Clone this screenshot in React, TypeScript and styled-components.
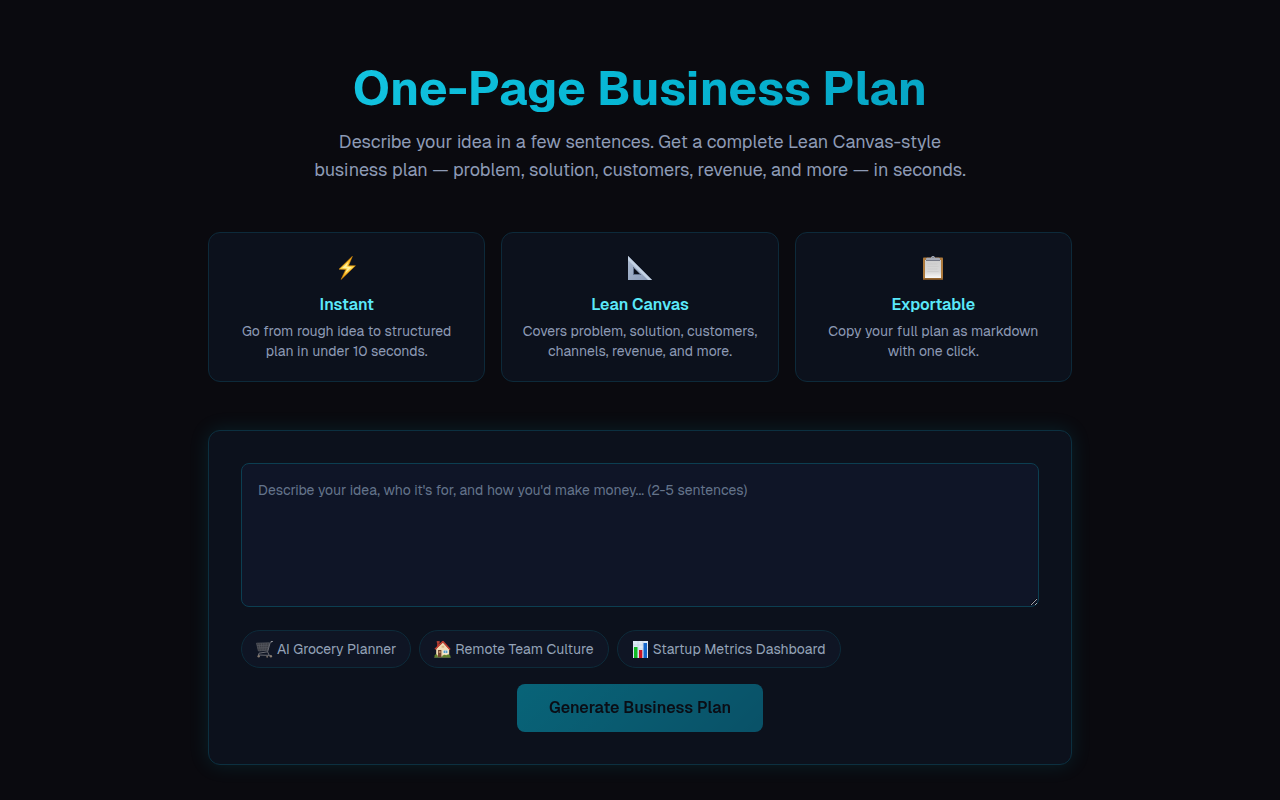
import React, { useState } from "react";
import styled, { createGlobalStyle } from "styled-components";

const Global = createGlobalStyle`
  *, *::before, *::after { box-sizing: border-box; }
  body {
    margin: 0;
    background: #0a0a0f;
    color: #8d9ab5;
    font-family: Geist, Inter, "Liberation Sans", sans-serif;
    line-height: 24px;
  }
  h1, h2, p { margin: 0; }
`;

const Page = styled.main`
  padding: 64px 0 32px;
`;

const Content = styled.div`
  max-width: 896px;
  margin: 0 auto;
  padding: 0 16px;
`;

const Hero = styled.header`
  text-align: center;
  margin-bottom: 48px;
`;

const Title = styled.h1`
  margin-bottom: 16px;
  font-size: 48px;
  line-height: 48px;
  font-weight: 700;
  color: transparent;
  background: linear-gradient(135deg, #22d3ee, #06b6d4 50%, #0891b2);
  background-clip: text;
`;

const Lead = styled.p`
  max-width: 672px;
  margin: 0 auto;
  font-size: 18px;
  line-height: 28px;
`;

const Features = styled.section`
  display: grid;
  grid-template-columns: repeat(auto-fit, minmax(240px, 1fr));
  gap: 16px;
  margin-bottom: 48px;
`;

const Card = styled.article`
  padding: 20px;
  text-align: center;
  background: #0c111c;
  border: 1px solid #0d2a3a;
  border-radius: 12px;
`;

const CardIcon = styled.div`
  display: flex;
  align-items: center;
  justify-content: center;
  height: 32px;
  padding-bottom: 2px;
  margin-bottom: 8px;
`;

const CardTitle = styled.h2`
  font-size: 16px;
  line-height: 24px;
  font-weight: 600;
  color: #5ae8f9;
  margin-bottom: 4px;
`;

const CardText = styled.p`
  font-size: 14px;
  line-height: 20px;
`;

const Panel = styled.form`
  display: flex;
  flex-direction: column;
  padding: 32px;
  background: #0c111c;
  border: 1px solid #0c3040;
  border-radius: 12px;
  box-shadow: 0 0 20px rgba(6, 182, 212, 0.13);
`;

const Idea = styled.textarea`
  display: block;
  width: 100%;
  height: 144px;
  padding: 16px;
  resize: vertical;
  font: inherit;
  font-size: 14px;
  line-height: 20px;
  color: #e2e8f0;
  background: #0f1527;
  border: 1px solid #0c3e51;
  border-radius: 8px;
  &::placeholder { color: #64748b; }
`;

const Chips = styled.div`
  display: flex;
  flex-wrap: wrap;
  gap: 8px;
  margin: 23px 0 16px;
`;

const Chip = styled.button`
  display: flex;
  align-items: center;
  gap: 4px;
  padding: 8px 14px;
  font: inherit;
  font-size: 14px;
  line-height: 20px;
  color: #94a3b8;
  background: #0f1524;
  border: 1px solid #0d2b3a;
  border-radius: 20px;
  cursor: pointer;
`;

const Submit = styled.button`
  align-self: center;
  padding: 12px 32px;
  font: inherit;
  font-weight: 600;
  font-size: 16px;
  line-height: 24px;
  color: #0a0a0f;
  background: linear-gradient(135deg, #06b6d4, #0891b2);
  border: 0;
  border-radius: 8px;
  cursor: pointer;
  &:disabled { opacity: 0.5; cursor: not-allowed; }
`;

const Bolt = () => (
  <svg width="24" height="24" viewBox="0 0 24 24" aria-hidden="true">
    <defs>
      <linearGradient id="bolt" x1="0" y1="0" x2="0" y2="1">
        <stop offset="0" stopColor="#ffab14" />
        <stop offset="0.5" stopColor="#ffd84a" />
        <stop offset="1" stopColor="#f59e0b" />
      </linearGradient>
    </defs>
    <path d="M17.4.3 4 13.2l6.8.2L6.1 23.4 20.4 9.8l-7-.1z" fill="url(#bolt)" stroke="#d28608" strokeWidth=".6" strokeLinejoin="round" />
    <path d="M13.5 5.8 7.2 12l5.4.3-2.5 5.2 6.8-6.5-5.5-.2z" fill="#fff2a0" />
  </svg>
);

const SetSquare = () => (
  <svg width="24" height="24" viewBox="0 0 24 24" aria-hidden="true">
    <defs>
      <linearGradient id="square" x1="0" y1="0" x2="1" y2="1">
        <stop offset="0" stopColor="#adbcd2" />
        <stop offset="1" stopColor="#8798b5" />
      </linearGradient>
    </defs>
    <path fillRule="evenodd" d="M0 0 24 24H0zM5 11v8h8z" fill="url(#square)" />
    <path d="M0 0 24 24h-4L0 4z" fill="#c3d2e4" />
    <path d="M5 19v-8l1 1v6h6l1 1z" fill="#60708b" />
  </svg>
);

const Clipboard = () => (
  <svg width="24" height="24" viewBox="0 0 24 24" aria-hidden="true">
    <defs>
      <linearGradient id="paper" x1="0" y1="0" x2="0" y2="1">
        <stop offset="0" stopColor="#cfcfcf" />
        <stop offset="0.65" stopColor="#d8d8d8" />
        <stop offset="1" stopColor="#f8f8f8" />
      </linearGradient>
    </defs>
    <rect x="2" y="1.5" width="20" height="22.5" rx=".8" fill="#ae7a3c" />
    <path d="M2 22.5h20V24H2z" fill="#795026" />
    <path d="M4 4h16v18H4z" fill="url(#paper)" />
    <path d="M6.5 8h10M6.5 10.5h11M6.5 13h10M6.5 15.5h11" stroke="#c8c8c8" strokeWidth=".6" />
    <path d="M5 4.4V2.8c0-.7.8-1 2-1h3C10.2.6 11 0 12 0s1.8.6 2 1.8h3c1.2 0 2 .3 2 1v1.6z" fill="#a5a9b5" />
    <path d="M5 4h14v1H5z" fill="#757986" />
    <circle cx="12" cy="1.4" r=".6" fill="#636879" />
  </svg>
);

const Cart = () => (
  <svg width="17" height="17" viewBox="0 0 17 17" fill="none" aria-hidden="true">
    <path d="M.5 2.2 13.2 1.8 11.7 9.2 2.4 10z" fill="#3b3d43" stroke="#54575e" strokeWidth=".8" />
    <path d="m2.8 2.2 1.6 7.6M5.3 2.2l1 7.4M7.8 2.1v7.4M10.3 2 9.6 9.3M1 4.5l11.5-.3M1.6 7l10.5-.4" stroke="#5a5d64" strokeWidth=".6" />
    <path d="M16.6.4 14.3 1.2 11.6 10.8l1.4 3.2M11.5 10.8 3 12.2l-.6 1.8 12.1.4" stroke="#6a6c73" strokeWidth="1" />
    <path d="m15 .9 1.8-.7" stroke="#a0a1a6" strokeWidth="1" />
    <circle cx="2.7" cy="15.3" r="1.2" fill="#877b70" />
    <circle cx="14.9" cy="15.2" r="1.2" fill="#877b70" />
    <circle cx="11.2" cy="15.8" r="1" fill="#6f665f" />
  </svg>
);

const House = () => (
  <svg width="17" height="17" viewBox="0 0 17 17" aria-hidden="true">
    <path d="M3 .8h2.5v5H3z" fill="#9c352c" />
    <path d="M2.7.3h3v1.1h-3z" fill="#d34d3c" />
    <path d="M2.2 7.8 9 1.5l6.2 6.7v7.6h-13z" fill="#f0dbb5" />
    <path d="M1 8.3 8.9.5l7.2 8" fill="none" stroke="#c53f31" strokeWidth="1.5" />
    <path d="M4 9h3.4v7H4z" fill="#72442e" />
    <path d="M4.8 10h1.8v2H4.8z" fill="#b98a65" />
    <path d="M9 9h5v3.7H9z" fill="#fff5df" />
    <path d="M9.5 9.5h4v2.6h-4z" fill="#599fc9" />
    <path d="M11.3 9.4h.5v2.8h-.5z" fill="#e4e8e8" />
    <path d="M7.6 4.7h2.6v2H7.6z" fill="#d7b788" />
    <path d="M.5 14.5 2 13l1.7 1.5v1.8H.5zM8.3 14.7l2-1 2 .5 2-1 2.2 1.5v1.6H8.3z" fill="#5e812d" />
    <path d="M.3 16h16.4v.8H.3z" fill="#667943" />
  </svg>
);

const BarChart = () => (
  <svg width="17" height="17" viewBox="0 0 17 17" aria-hidden="true">
    <path d="M1 0h15v17H1z" fill="#dce8f5" />
    <path d="M1 4h15M1 8h15M1 12h15M6 0v17M11 0v17" stroke="#b9cad9" strokeWidth=".5" />
    <path d="M2 6h3.5v11H2z" fill="#10ba23" />
    <path d="M7 9h3.3v8H7z" fill="#ca1422" />
    <path d="M11.5 2H15v15h-3.5z" fill="#1265cb" />
  </svg>
);

const features = [
  { Icon: Bolt, title: "Instant", text: "Go from rough idea to structured plan in under 10 seconds." },
  { Icon: SetSquare, title: "Lean Canvas", text: "Covers problem, solution, customers, channels, revenue, and more." },
  { Icon: Clipboard, title: "Exportable", text: "Copy your full plan as markdown with one click." },
];

const examples = [
  { Icon: Cart, label: "AI Grocery Planner" },
  { Icon: House, label: "Remote Team Culture" },
  { Icon: BarChart, label: "Startup Metrics Dashboard" },
];

export default function App() {
  const [idea, setIdea] = useState("");
  return (
    <>
      <Global />
      <Page>
        <Hero>
          <Title>One-Page Business Plan</Title>
          <Lead>
            Describe your idea in a few sentences. Get a complete Lean Canvas-style business plan — problem,
            solution, customers, revenue, and more — in seconds.
          </Lead>
        </Hero>
        <Content>
          <Features>
            {features.map(({ Icon, title, text }) => (
              <Card key={title}>
                <CardIcon><Icon /></CardIcon>
                <CardTitle>{title}</CardTitle>
                <CardText>{text}</CardText>
              </Card>
            ))}
          </Features>
          <Panel onSubmit={(e) => e.preventDefault()}>
            <Idea
              aria-label="Your idea"
              placeholder="Describe your idea, who it's for, and how you'd make money... (2-5 sentences)"
              value={idea}
              onChange={(e) => setIdea(e.target.value)}
            />
            <Chips>
              {examples.map(({ Icon, label }) => (
                <Chip key={label} type="button" onClick={() => setIdea(label)}>
                  <Icon />
                  {label}
                </Chip>
              ))}
            </Chips>
            <Submit type="submit" disabled={!idea.trim()}>Generate Business Plan</Submit>
          </Panel>
        </Content>
      </Page>
    </>
  );
}
